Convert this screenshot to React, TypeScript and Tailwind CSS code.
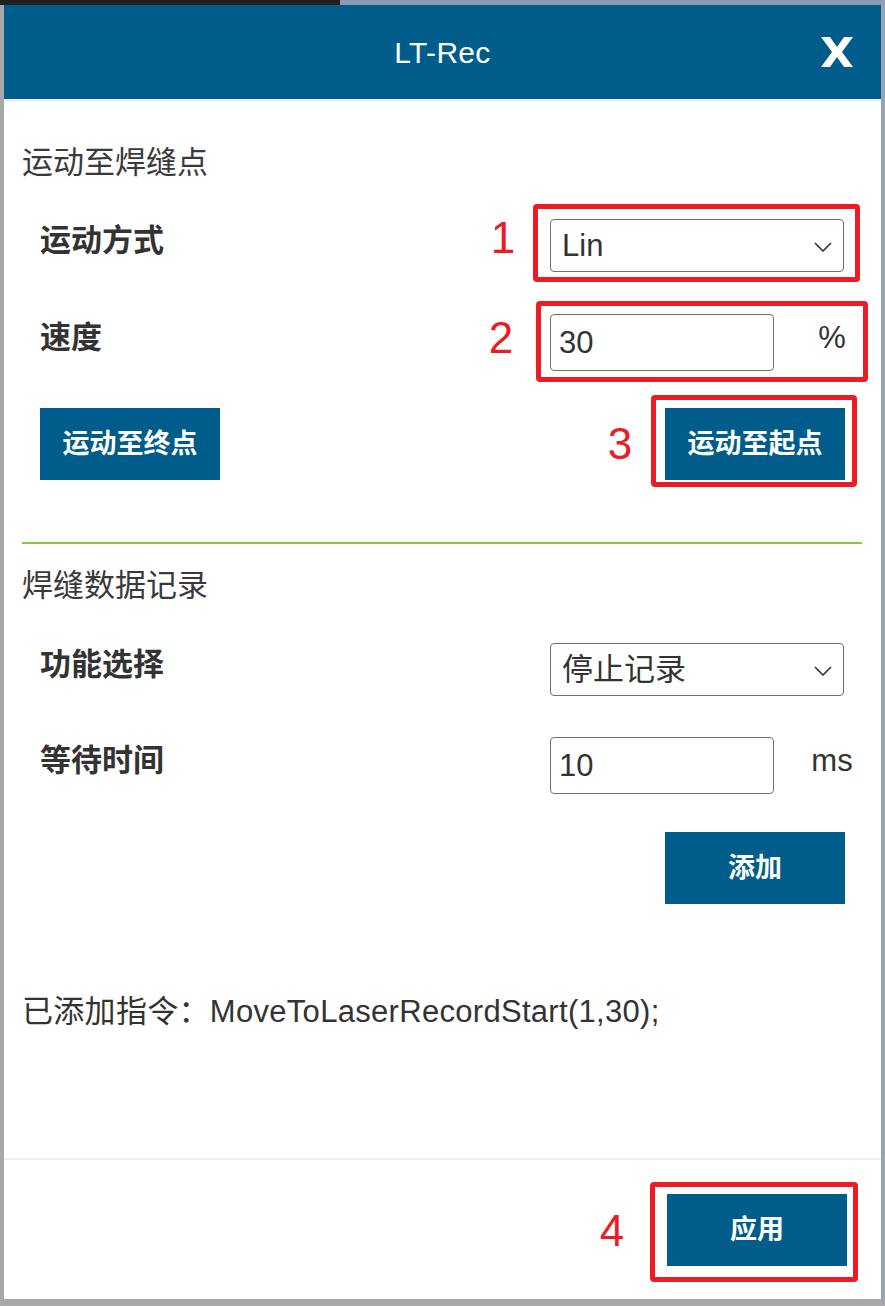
const Mark = ({ n, className }: { n: string; className: string }) => (
  <span className={`pointer-events-none absolute w-[40px] text-center text-[44px] leading-[44px] text-[#ec1c24] ${className}`}>{n}</span>
);

const Chevron = () => (
  <svg width="18" height="10" viewBox="0 0 18 10" className="absolute right-[11px] top-[22px]">
    <polyline points="1,1 9,9 17,1" fill="none" stroke="#333" strokeWidth="1.6" />
  </svg>
);

const Select = ({ value, children }: { value: string; children?: React.ReactNode }) => (
  <div className="relative h-[53px] w-[294px] rounded-[4px] border border-[#707070] bg-white pl-[11px] text-[31px] leading-[51px] text-[#333]">
    {value}
    <Chevron />
    {children}
  </div>
);

const Field = ({ value, unit, children }: { value: string; unit: string; children?: React.ReactNode }) => (
  <div className="relative flex w-[322px] items-start">
    <div className="h-[57px] w-[224px] rounded-[4px] border border-[#707070] bg-white pl-[8px] text-[31px] leading-[55px] text-[#333]">{value}</div>
    <span className="ml-[18px] mt-[4px] w-[80px] text-center text-[31px] leading-[40px] text-[#333]">{unit}</span>
    {children}
  </div>
);

const Button = ({ label, children }: { label: string; children?: React.ReactNode }) => (
  <button className="relative h-[72px] w-[180px] bg-[#005d8b] text-[27px] font-bold text-white">
    {label}
    {children}
  </button>
);

const Label = ({ text }: { text: string }) => (
  <span className="mb-[10px] w-[546px] pl-[36px] text-[31px] font-bold leading-[40px] text-[#333]">{text}</span>
);

export default function App() {
  return (
    <div className="relative flex h-[1306px] w-[885px] flex-col overflow-hidden bg-[#a8a8a8] pb-[7px] pl-[4px] pr-[4px] pt-[5px] [font-family:'Liberation_Sans','Noto_Sans_CJK_SC',sans-serif]">
      {/* app behind the overlay */}
      <div className="absolute left-0 top-0 h-[5px] w-[340px] bg-[#1f1f1f]" />
      <div className="absolute left-[340px] top-0 h-[5px] w-[545px] bg-[#8e9bb3]" />
      <div className="absolute right-0 top-[5px] h-[1294px] w-[4px] bg-[#98a3b5]" />

      <div className="relative flex flex-1 flex-col bg-white">
        {/* header */}
        <div className="relative flex h-[97px] items-center justify-center border-b-[3px] border-[#f1f1f1] bg-[#005d8b]">
          <span className="text-[30px] tracking-[0.3px] text-white">LT-Rec</span>
          <svg width="32" height="30" viewBox="0 0 32 30" className="absolute right-[28px] top-[32px]">
            <polygon points="0,0 9,0 16,10 23,0 32,0 21,15 32,30 23,30 16,20 9,30 0,30 11,15" fill="#fff" />
          </svg>
        </div>

        {/* body */}
        <div className="flex flex-1 flex-col pt-[41px]">
          <h3 className="pl-[18px] text-[31px] leading-[40px] text-[#3a3a3a]">运动至焊缝点</h3>

          <div className="mt-[36px] flex items-center">
            <Label text="运动方式" />
            <Select value="Lin">
              <span className="pointer-events-none absolute -bottom-[11px] -left-[18px] -right-[17px] -top-[16px] rounded-[4px] border-[5px] border-[#ec1c24]" />
              <Mark n="1" className="-left-[68px] -top-[4px]" />
            </Select>
          </div>

          <div className="mt-[42px] flex items-center">
            <Label text="速度" />
            <Field value="30" unit="%">
              <span className="pointer-events-none absolute -bottom-[11px] -left-[14px] -top-[13px] right-[4px] rounded-[4px] border-[5px] border-[#ec1c24]" />
              <Mark n="2" className="-left-[69px] top-[2px]" />
            </Field>
          </div>

          <div className="mt-[37px] flex justify-between pl-[36px] pr-[36px]">
            <Button label="运动至终点" />
            <Button label="运动至起点">
              <span className="pointer-events-none absolute -bottom-[7px] -left-[14px] -right-[12px] -top-[13px] rounded-[4px] border-[5px] border-[#ec1c24]" />
              <Mark n="3" className="-left-[65px] top-[14px] font-normal" />
            </Button>
          </div>

          <div className="ml-[18px] mr-[19px] mt-[62px] h-[2px] bg-[#8dc63f]" />

          <h3 className="mt-[22px] pl-[18px] text-[31px] leading-[40px] text-[#3a3a3a]">焊缝数据记录</h3>

          <div className="mt-[37px] flex items-center">
            <Label text="功能选择" />
            <Select value="停止记录" />
          </div>

          <div className="mt-[41px] flex items-center">
            <Label text="等待时间" />
            <Field value="10" unit="ms" />
          </div>

          <div className="mt-[38px] flex justify-end pr-[36px]">
            <Button label="添加" />
          </div>

          <p className="mt-[88px] pl-[18px] text-[31px] leading-[40px] tracking-[0.3px] text-[#333]">已添加指令：MoveToLaserRecordStart(1,30);</p>
        </div>

        {/* footer */}
        <div className="flex justify-end border-t-2 border-[#f0f0f0] pb-[33px] pr-[34px] pt-[34px]">
          <Button label="应用">
            <span className="pointer-events-none absolute -bottom-[16px] -left-[17px] -right-[11px] -top-[12px] rounded-[4px] border-[5px] border-[#ec1c24]" />
            <Mark n="4" className="-left-[75px] top-[15px] font-normal" />
          </Button>
        </div>
      </div>
    </div>
  );
}
